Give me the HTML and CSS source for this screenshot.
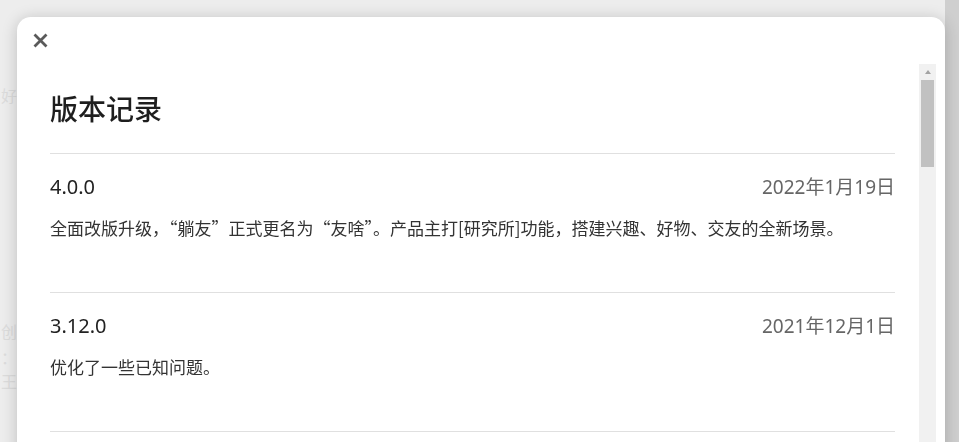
FILE: index.html
```html
<!DOCTYPE html>
<html lang="zh-CN">
<head>
<meta charset="utf-8">
<title>版本记录</title>
<link rel="stylesheet" href="styles.css">
</head>
<body>
<div class="backdrop">
  <div class="ghost">
    <p class="ghost-line g1">好</p>
    <p class="ghost-line g2">创</p>
    <p class="ghost-line g3">：</p>
    <p class="ghost-line g4">王</p>
  </div>
  <div class="page-scroll"></div>
</div>
<div class="modal">
  <div class="modal-head">
    <button class="close" aria-label="关闭">
      <svg width="15" height="15" viewBox="0 0 15 15"><path d="M1.5 1.5 L13.5 13.5 M13.5 1.5 L1.5 13.5" stroke="#5a5a5a" stroke-width="2.8" fill="none"/></svg>
    </button>
  </div>
  <div class="modal-body">
    <div class="content">
      <h1 class="title">版本记录</h1>
      <section class="entry">
        <div class="entry-head">
          <span class="version">4.0.0</span>
          <span class="date">2022年1月19日</span>
        </div>
        <p class="desc">全面改版升级，“躺友”正式更名为“友啥”。产品主打[研究所]功能，搭建兴趣、好物、交友的全新场景。</p>
      </section>
      <section class="entry">
        <div class="entry-head">
          <span class="version">3.12.0</span>
          <span class="date">2021年12月1日</span>
        </div>
        <p class="desc">优化了一些已知问题。</p>
      </section>
      <div class="entry-end"></div>
    </div>
    <div class="scrollbar">
      <div class="sb-arrow"></div>
      <div class="sb-thumb"></div>
    </div>
  </div>
</div>
</body>
</html>
```

FILE: styles.css
```css
html, body {
  margin: 0;
  padding: 0;
}
body {
  width: 959px;
  height: 442px;
  overflow: hidden;
  background: #ededed;
  font-family: "Noto Sans", "Noto Sans CJK SC", sans-serif;
}
.backdrop {
  display: flex;
  height: 442px;
}
.ghost {
  flex: 1;
  padding-left: 1px;
}
.ghost-line {
  margin: 0;
  font-size: 16px;
  line-height: 20px;
  color: #dcdcdc;
}
.g1 { margin-top: 86px; }
.g2 { margin-top: 216px; }
.g3 { margin-top: 6px; }
.g4 { margin-top: 4px; }
.page-scroll {
  width: 14px;
  background: #cfcfcf;
}
.modal {
  position: fixed;
  left: 17px;
  top: 17px;
  width: 928px;
  height: 470px;
  background: #fff;
  border-radius: 14px;
  box-shadow: 0 2px 16px rgba(0, 0, 0, 0.2);
  display: flex;
  flex-direction: column;
}
.modal-head {
  height: 47px;
  flex: none;
}
.close {
  display: block;
  margin: 16px 0 0 16px;
  padding: 0;
  width: 15px;
  height: 15px;
  border: 0;
  background: none;
}
.close svg {
  display: block;
}
.modal-body {
  flex: 1;
  display: flex;
  padding-right: 9px;
  min-height: 0;
}
.content {
  flex: 1;
  padding: 0 24px 0 33px;
  overflow: hidden;
}
.title {
  margin: 0;
  padding: 26px 0 27px;
  font-size: 28px;
  line-height: 36px;
  font-weight: 500;
  color: #1e1e1e;
  font-family: "Noto Sans CJK SC", sans-serif;
}
.entry {
  border-top: 1px solid #e0e0e0;
  padding: 19px 0 52px;
}
.entry-end {
  border-top: 1px solid #e0e0e0;
}
.entry-head {
  display: flex;
  justify-content: space-between;
  align-items: center;
  height: 26px;
}
.version {
  font-size: 20px;
  color: #222;
}
.date {
  font-size: 19px;
  color: #666;
}
.desc {
  margin: 17px 0 0;
  font-size: 17px;
  line-height: 24px;
  color: #333;
  font-family: "Noto Sans CJK SC", sans-serif;
}
.scrollbar {
  width: 17px;
  background: #f1f1f1;
  flex: none;
}
.sb-arrow {
  height: 16px;
  display: flex;
  justify-content: center;
  align-items: center;
}
.sb-arrow::before {
  content: "";
  width: 0;
  height: 0;
  border-left: 3.5px solid transparent;
  border-right: 3.5px solid transparent;
  border-bottom: 4px solid #a3a3a3;
}
.sb-thumb {
  margin: 0 2px;
  height: 87px;
  background: #c1c1c1;
}
```
